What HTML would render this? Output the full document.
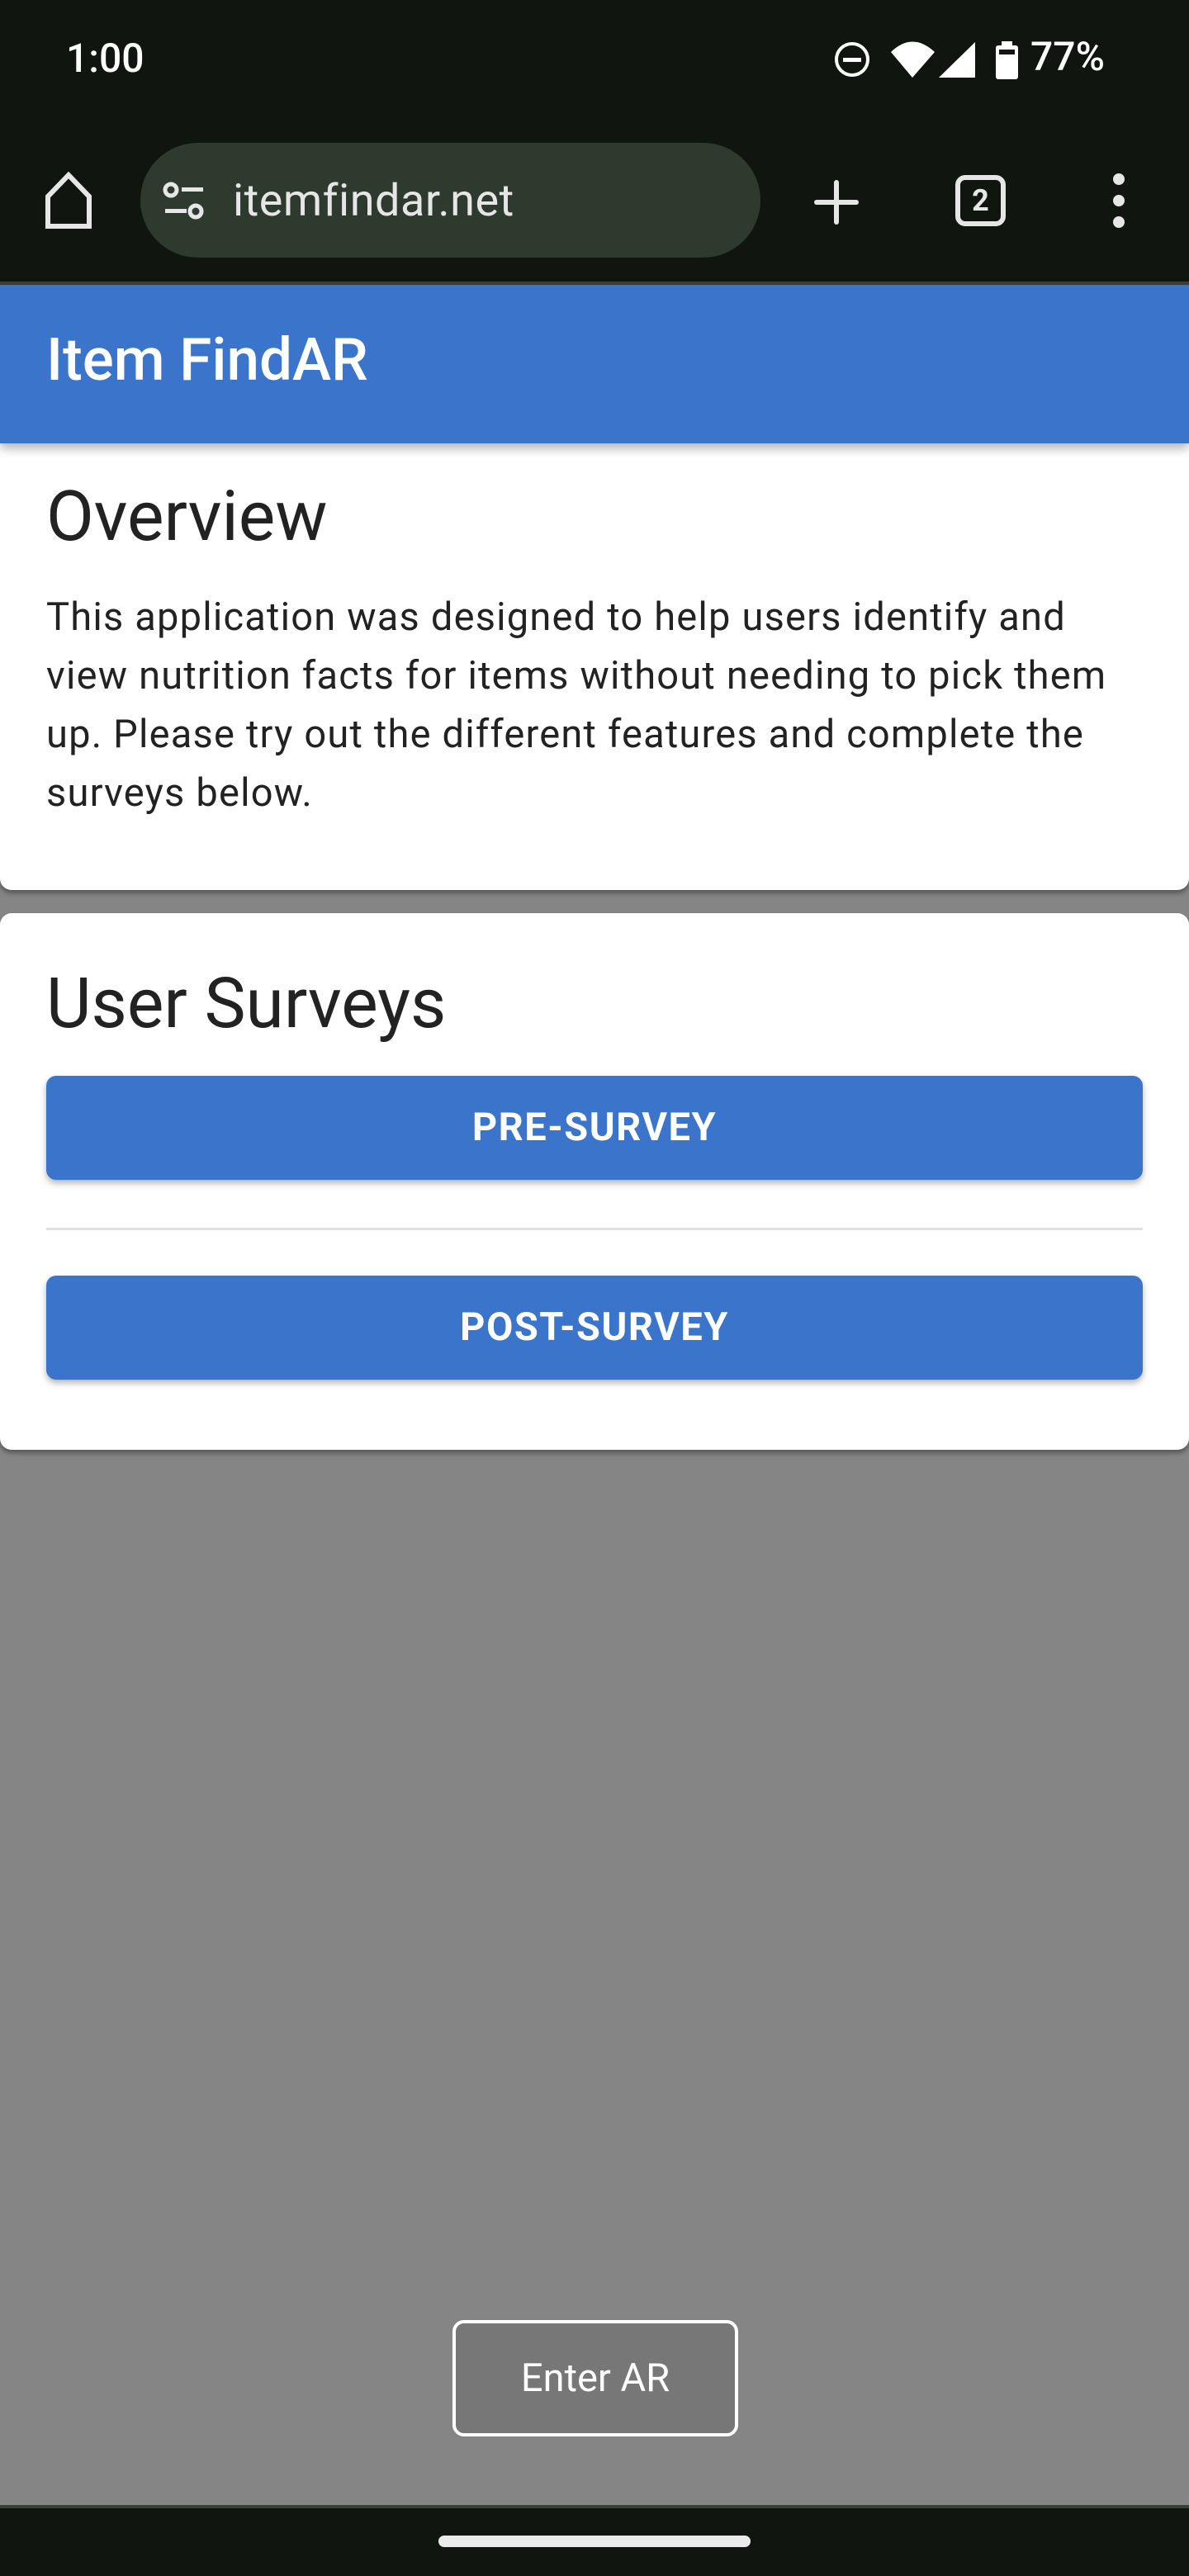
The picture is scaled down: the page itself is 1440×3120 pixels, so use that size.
<!DOCTYPE html>
<html><head><meta charset="utf-8"><style>
*{margin:0;padding:0;box-sizing:border-box}
body{width:1440px;height:3120px;background:#858585;font-family:"Roboto","Liberation Sans",sans-serif;position:relative;overflow:hidden}
.abs{position:absolute}
.top{left:0;top:0;width:1440px;height:341px;background:#111510}
.line{left:0;top:341px;width:1440px;height:4px;background:#3a4038}
.hdr{left:0;top:345px;width:1440px;height:192px;background:#3a75cb;box-shadow:0 6px 12px rgba(0,0,0,.3);z-index:3}
.card{left:0;width:1440px;background:#fff;border-radius:14px;box-shadow:0 4px 6px rgba(0,0,0,.35)}
.btn{left:56px;width:1328px;height:126px;background:#3a75cb;border-radius:12px;color:#fff;font-size:47px;font-weight:bold;text-align:center;line-height:126px;letter-spacing:1.5px;box-shadow:0 4px 8px rgba(0,0,0,.3)}
p.t{left:56px;top:712px;font-size:47px;line-height:71px;color:#222;white-space:nowrap;letter-spacing:1.2px}
</style></head><body>
<div class="abs top"></div>
<div class="abs line"></div>
<div class="abs" style="left:80px;top:42px;color:#fff;font-size:48px;font-weight:500">1:00</div>
<svg class="abs" style="left:1000px;top:30px" width="440" height="100" viewBox="1000 30 440 100">
<circle cx="1032" cy="72" r="19" fill="none" stroke="#fff" stroke-width="4"/>
<rect x="1021" y="70" width="22" height="5" fill="#fff"/>
<path d="M1079 63 Q1105 38 1132 63 L1105 94 Z" fill="#fff"/>
<path d="M1181 51 L1181 94 L1137 94 Z" fill="#fff"/>
<rect x="1206" y="55" width="27" height="41" rx="3" fill="#fff"/>
<rect x="1213" y="50" width="13" height="6" fill="#fff"/>
<rect x="1210" y="60" width="19" height="6" fill="#111510"/>
</svg>
<div class="abs" style="left:1248px;top:40px;color:#fff;font-size:48px;font-weight:500">77%</div>
<svg class="abs" style="left:50px;top:208px" width="70" height="72" viewBox="0 0 70 72"><path d="M8 66 V30 L33 4 L58 30 V66 Z" fill="none" stroke="#e6e6e6" stroke-width="6" stroke-linejoin="miter"/></svg>
<div class="abs" style="left:170px;top:173px;width:751px;height:139px;background:#2f3a2f;border-radius:70px"></div>
<svg class="abs" style="left:196px;top:220px" width="56" height="48" viewBox="0 0 56 48"><circle cx="11" cy="10" r="7" fill="none" stroke="#e6e6e6" stroke-width="5"/><rect x="24" y="7" width="26" height="5" fill="#e6e6e6"/><circle cx="41" cy="36" r="7" fill="none" stroke="#e6e6e6" stroke-width="5"/><rect x="4" y="33" width="26" height="5" fill="#e6e6e6"/></svg>
<div class="abs" style="left:282px;top:212px;color:#e6e6e6;font-size:54px;letter-spacing:0.5px">itemfindar.net</div>
<svg class="abs" style="left:983px;top:215px" width="60" height="60"><rect x="27" y="3" width="6" height="54" rx="3" fill="#e6e6e6"/><rect x="3" y="27" width="54" height="6" rx="3" fill="#e6e6e6"/></svg>
<div class="abs" style="left:1157px;top:212px;width:61px;height:62px;border:6px solid #e6e6e6;border-radius:12px;color:#e6e6e6;font-size:36px;font-weight:bold;text-align:center;line-height:50px">2</div>
<svg class="abs" style="left:1343px;top:208px" width="24" height="70"><circle cx="12" cy="9" r="7" fill="#e6e6e6"/><circle cx="12" cy="35" r="7" fill="#e6e6e6"/><circle cx="12" cy="61" r="7" fill="#e6e6e6"/></svg>
<div class="abs hdr"><div class="abs" style="left:56px;top:50px;color:#fff;font-size:71px;font-weight:500">Item FindAR</div></div>
<div class="abs card" style="top:520px;height:558px;border-radius:0 0 14px 14px"></div>
<div class="abs" style="left:56px;top:576px;font-size:84px;color:#222">Overview</div>
<p class="abs t">This application was designed to help users identify and<br>view nutrition facts for items without needing to pick them<br>up. Please try out the different features and complete the<br>surveys below.</p>
<div class="abs card" style="top:1106px;height:650px"></div>
<div class="abs" style="left:56px;top:1166px;font-size:84px;color:#222">User Surveys</div>
<div class="abs btn" style="top:1303px">PRE-SURVEY</div>
<div class="abs" style="left:56px;top:1487px;width:1328px;height:3px;background:#e0e0e0"></div>
<div class="abs btn" style="top:1545px">POST-SURVEY</div>
<div class="abs" style="left:548px;top:2810px;width:346px;height:141px;border:4px solid #fff;border-radius:14px;background:#777;color:#fff;font-size:47px;text-align:center;line-height:133px">Enter AR</div>
<div class="abs" style="left:0;top:3034px;width:1440px;height:4px;background:#3a4038"></div>
<div class="abs" style="left:0;top:3038px;width:1440px;height:82px;background:#111510"></div>
<div class="abs" style="left:531px;top:3071px;width:378px;height:14px;border-radius:7px;background:#ebebeb"></div>
</body></html>
